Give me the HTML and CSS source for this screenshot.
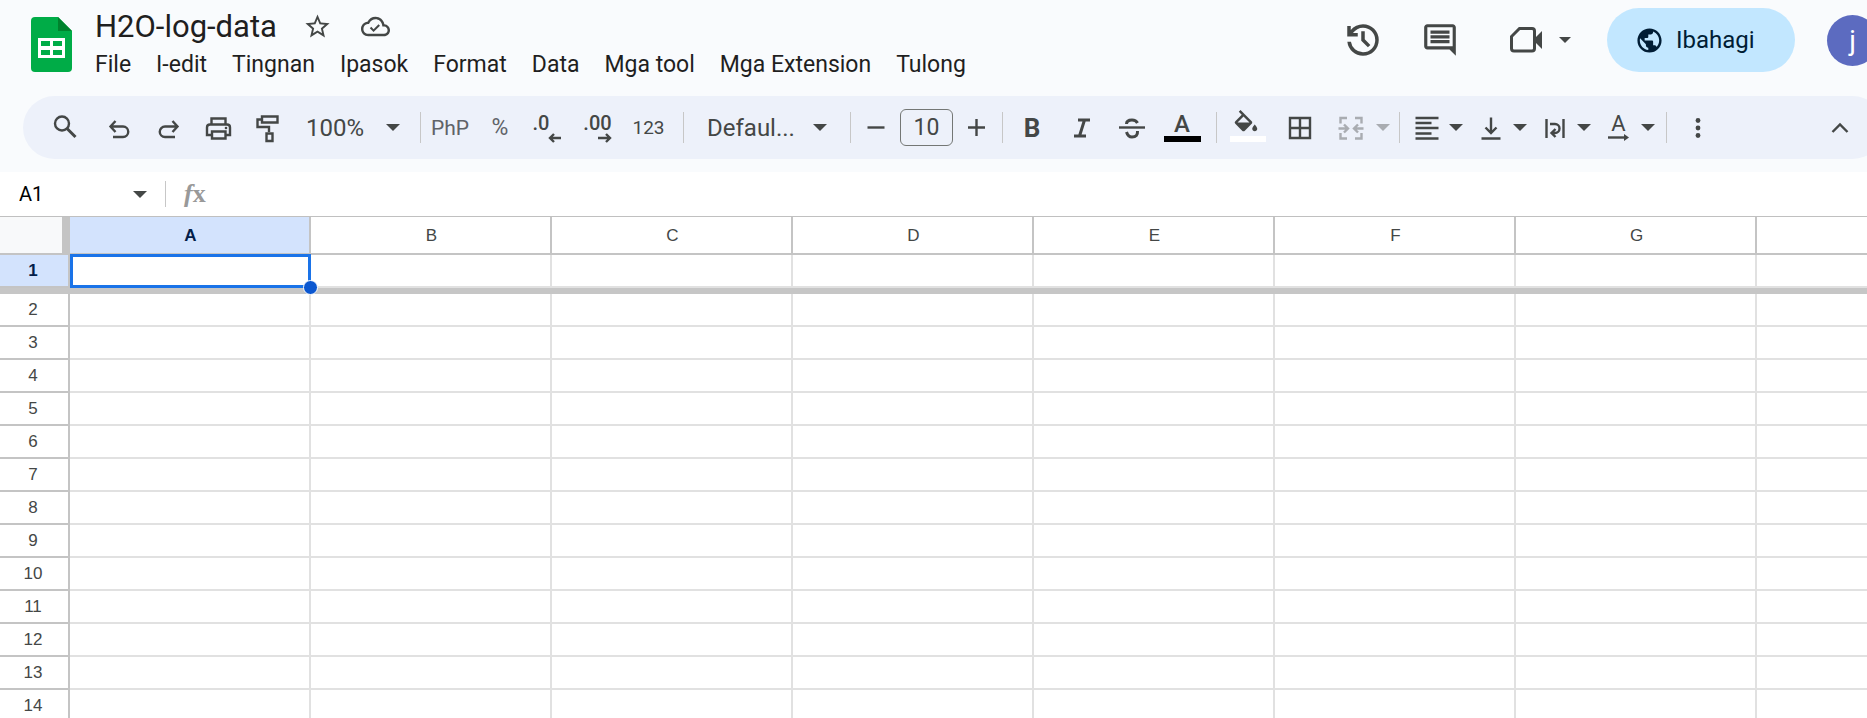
FILE: index.html
```html
<!DOCTYPE html>
<html lang="fil">
<head>
<meta charset="utf-8">
<title>H2O-log-data</title>
<link rel="stylesheet" href="styles.css">
</head>
<body>
<svg class="defs" width="0" height="0" aria-hidden="true">
  <symbol id="caret" viewBox="0 0 14 7"><path d="M0 0h14L7 7z"/></symbol>
</svg>
<header class="top">
  <div class="titlebar">
    <svg class="logo" viewBox="0 0 41 55" aria-label="Sheets">
      <path fill="#00ac47" d="M4 0h23l14 14v37a4 4 0 0 1-4 4H4a4 4 0 0 1-4-4V4a4 4 0 0 1 4-4z"/>
      <path fill="#00832d" d="M27 0l14 14H27z"/>
      <path fill="#fff" fill-rule="evenodd" d="M7 21h27v20H7zM10 24v5h9v-5zM22 24v5h9v-5zM10 33v5h9v-5zM22 33v5h9v-5z"/>
    </svg>
    <div class="doc">
      <div class="name-row">
        <h1 class="name">H2O-log-data</h1>
        <button class="plain" aria-label="Star"><svg class="i29" viewBox="0 0 24 24"><path d="M22 9.24l-7.19-.62L12 2 9.19 8.63 2 9.24l5.46 4.73L5.82 21 12 17.27 18.18 21l-1.63-7.03L22 9.24zM12 15.4l-3.76 2.27 1-4.28-3.32-2.88 4.38-.38L12 6.1l1.71 4.04 4.38.38-3.32 2.88 1 4.28L12 15.4z"/></svg></button>
        <button class="plain" aria-label="Saved"><svg class="i29" viewBox="0 0 24 24"><path d="M19.35 10.04C18.67 6.59 15.64 4 12 4 9.11 4 6.6 5.64 5.35 8.04 2.34 8.36 0 10.91 0 14c0 3.31 2.69 6 6 6h13c2.76 0 5-2.24 5-5 0-2.64-2.05-4.78-4.65-4.96zM19 18H6c-2.21 0-4-1.79-4-4 0-2.05 1.53-3.76 3.56-3.97l1.07-.11.5-.95C8.08 7.14 9.94 6 12 6c2.62 0 4.88 1.86 5.39 4.43l.3 1.5 1.53.11c1.56.1 2.78 1.41 2.78 2.96 0 1.65-1.35 3-3 3z"/><path d="M10.4 14.200l-1.900-1.900L7.300 13.500l3.100 3.100 5.300-5.300-1.200-1.200z"/></svg></button>
      </div>
      <nav class="menu">
        <button>File</button><button>I-edit</button><button>Tingnan</button><button>Ipasok</button><button>Format</button><button>Data</button><button>Mga tool</button><button>Mga Extension</button><button>Tulong</button>
      </nav>
    </div>
    <div class="actions">
      <button class="plain" aria-label="History"><svg class="i42" viewBox="0 0 24 24"><path d="M12 21q-3.45 0-6.012-2.287T3.05 13H5.1q.35 2.6 2.313 4.3T12 19q2.925 0 4.963-2.037T19 12t-2.037-4.963T12 5q-1.725 0-3.225.8T6.25 8H9v2H3V4h2v2.35q1.275-1.6 3.113-2.475T12 3q1.875 0 3.513.713t2.85 1.924 1.925 2.85T21 12t-.712 3.513-1.925 2.85-2.85 1.925T12 21m2.8-4.8L11 12.4V7h2v4.6l3.2 3.2z"/></svg></button>
      <button class="plain" aria-label="Comments"><svg class="i38" viewBox="0 0 24 24"><path d="M21.99 4c0-1.1-.89-2-1.99-2H4c-1.1 0-2 .9-2 2v12c0 1.1.9 2 2 2h14l4 4-.01-18zM20 4v12H4V4zM6 12h12v2H6zm0-3h12v2H6zm0-3h12v2H6z"/></svg></button>
      <button class="plain meet" aria-label="Meet"><svg class="i32" viewBox="0 0 32 32"><path class="s3" d="M9.500 4.500H22a2.500 2.500 0 0 1 2.500 2.500V24.500a2.500 2.500 0 0 1-2.500 2.500H4a2.500 2.500 0 0 1-2.500-2.500V12.500z"/><path d="M25 14l7-7v18l-7-7z"/></svg><svg class="caret small"><use href="#caret"/></svg></button>
      <button class="share"><svg class="i29" viewBox="0 0 24 24"><path d="M12 2C6.48 2 2 6.48 2 12s4.480 10 10 10 10-4.480 10-10S17.520 2 12 2zm-1 17.930c-3.950-.49-7-3.850-7-7.930 0-.62.08-1.210.21-1.790L9 15v1c0 1.100.9 2 2 2v1.930zm6.900-2.540c-.26-.81-1-1.390-1.900-1.390h-1v-3c0-.55-.45-1-1-1H8v-2h2c.55 0 1-.45 1-1V7h2c1.100 0 2-.9 2-2v-.41c2.930 1.190 5 4.060 5 7.410 0 2.080-.8 3.970-2.100 5.390z"/></svg>Ibahagi</button>
      <button class="avatar">j</button>
    </div>
  </div>

  <div class="toolbar" role="toolbar">
    <button class="tb w60" aria-label="Search"><svg class="i32" viewBox="0 0 32 32"><circle class="s" cx="13" cy="11.500" r="7"/><path class="s3" d="M18 16.500l8.500 8.500"/></svg></button>
    <button class="tb" aria-label="Undo"><svg class="i32" viewBox="0 0 32 32"><path class="s" d="M11.500 9L6.500 14.500l5 5.500M7 14.500h12a5 5 0 0 1 0 10.500h-10"/></svg></button>
    <button class="tb" aria-label="Redo"><svg class="i32" viewBox="0 0 32 32"><path class="s" d="M19.500 9l5 5.500-5 5.500M24 14.500H12A5 5 0 0 0 12 25h10"/></svg></button>
    <button class="tb" aria-label="Print"><svg class="i32" viewBox="0 0 32 32"><path class="s" d="M9.500 12V6.500h14V12M9 23H5V15.500q0-3 3-3h17q3 0 3 3V23h-4M10 19.500h13.500v7H10z"/><circle cx="24" cy="16" r="1.300"/></svg></button>
    <button class="tb" aria-label="Paint format"><svg class="i32" viewBox="0 0 32 32"><path class="s" d="M11 4.500h15.500v6H11zM11 7.500H6.500v7.500H18v5M15.500 21.500h6v7.500h-6z"/></svg></button>
    <label class="pick zoom"><select aria-label="Zoom"><option>100%</option></select><svg class="caret"><use href="#caret"/></svg></label>
    <span class="sep"></span>
    <button class="tb w58 fmt">PhP</button>
    <button class="tb w42 fmt pct">%</button>
    <button class="tb w51 dec short" aria-label="Decrease decimal places"><span>.0</span><svg viewBox="0 0 28 12"><path class="s" d="M28 6H17M21 2l-4 4 4 4"/></svg></button>
    <button class="tb w51 dec" aria-label="Increase decimal places"><span>.00</span><svg viewBox="0 0 28 12"><path class="s" d="M14 6h12M22 2l4 4-4 4"/></svg></button>
    <button class="tb w51 fmt n123">123</button>
    <span class="sep sep-a"></span>
    <label class="pick font"><select aria-label="Font"><option>Defaul...</option></select><svg class="caret"><use href="#caret"/></svg></label>
    <span class="sep"></span>
    <button class="tb" aria-label="Decrease font size"><svg class="i32" viewBox="0 0 32 32"><path class="s" d="M7.500 15.500h17"/></svg></button>
    <input class="size" aria-label="Font size" value="10">
    <button class="tb" aria-label="Increase font size"><svg class="i32" viewBox="0 0 32 32"><path class="s" d="M6 15.500h17M14.500 7v17"/></svg></button>
    <span class="sep"></span>
    <button class="tb w58 bold">B</button>
    <button class="tb w42" aria-label="Italic"><svg class="i32" viewBox="0 0 32 32"><path class="s3" d="M12 8h12M8 24h12M18.500 8l-5 16"/></svg></button>
    <button class="tb w58" aria-label="Strikethrough"><svg class="i32" viewBox="0 0 32 32"><path class="s" d="M3 15.500h26"/><path class="s3" d="M10.500 12q0-4 5.500-4 4 0 5.500 3M10.500 20q1.500 5 5.500 5 6 0 5.500-6"/></svg></button>
    <button class="tb w42 color"><span>A</span><i></i></button>
    <span class="sep sep-b"></span>
    <button class="tb w62" aria-label="Fill color"><svg class="fill" viewBox="0 0 38 40"><path transform="translate(2 2) scale(1.250)" d="M16.560 8.940L7.620 0 6.210 1.410l2.380 2.380-5.150 5.150a1.490 1.490 0 0 0 0 2.120l5.500 5.500c.29.29.68.44 1.060.44s.77-.15 1.060-.44l5.500-5.500c.59-.58.59-1.530 0-2.120zM5.210 10L10 5.210 14.790 10H5.210zM19 11.500s-2 2.170-2 3.500c0 1.100.9 2 2 2s2-.9 2-2c0-1.330-2-3.500-2-3.500z"/><path fill="#fff" d="M1 28h36v6H1z"/></svg></button>
    <button class="tb w42" aria-label="Borders"><svg class="i32" viewBox="0 0 32 32"><path class="s" d="M6 6h20v20H6zM16 6v20M6 16h20"/></svg></button>
    <button class="tb merge" disabled aria-label="Merge"><svg class="i32" viewBox="0 0 32 32"><path class="s" d="M12 6H5.500v5.500M20 6h6.500v5.500M12 26.500H5.500V21M20 26.500h6.500V21M3.500 16.500H12M9 12.500l4 4-4 4M28.500 16.500H20M23 12.500l-4 4 4 4"/></svg><svg class="caret"><use href="#caret"/></svg></button>
    <span class="sep"></span>
    <button class="tb drop" aria-label="Horizontal align"><svg class="i32" viewBox="0 0 32 32"><path class="s" d="M4.500 6h23M4.500 11h16M4.500 16h23M4.500 21.500h16M4.500 26.500h23"/></svg><svg class="caret"><use href="#caret"/></svg></button>
    <button class="tb drop" aria-label="Vertical align"><svg class="i32" viewBox="0 0 32 32"><path class="s" d="M6.500 26.500h19M16 5.500v15M10.500 15.500l5.500 5.500 5.500-5.500"/></svg><svg class="caret"><use href="#caret"/></svg></button>
    <button class="tb drop" aria-label="Text wrap"><svg class="i32" viewBox="0 0 32 32"><path class="s" d="M7.500 7v19M24.500 7v19M11 12h5a4.500 4.500 0 0 1 0 9h-3M16.500 17l-4 4 4 4"/></svg><svg class="caret"><use href="#caret"/></svg></button>
    <button class="tb drop rot"><span class="rotate"><span>A</span><svg viewBox="0 0 22 7"><path class="s" d="M0 3.500h18"/><path d="M16 0l5 3.500-5 3.500z"/></svg></span><svg class="caret"><use href="#caret"/></svg></button>
    <span class="sep sep-c"></span>
    <button class="tb w62" aria-label="More"><svg class="i32" viewBox="0 0 32 32"><circle cx="16" cy="8.500" r="2.400"/><circle cx="16" cy="16" r="2.400"/><circle cx="16" cy="23.500" r="2.400"/></svg></button>
    <button class="tb hide" aria-label="Hide menus"><svg class="i32" viewBox="0 0 32 32"><path class="s" d="M8.500 20l7.500-7.500 7.500 7.500"/></svg></button>
  </div>
</header>

<div class="formula">
  <label class="cellname"><input aria-label="Name box" value="A1"><svg class="caret"><use href="#caret"/></svg></label>
  <span class="fx"><i>f</i>x</span>
  <input class="expr" aria-label="Formula">
</div>

<main class="sheet">
  <table class="grid">
    <colgroup><col class="c0"><col class="c"><col class="c"><col class="c"><col class="c"><col class="c"><col class="c"><col class="c"><col class="c"></colgroup>
    <thead><tr><th class="corner"></th><th class="on">A</th><th>B</th><th>C</th><th>D</th><th>E</th><th>F</th><th>G</th><th></th></tr></thead>
    <tbody>
      <tr><th class="on">1</th><td class="active"><span class="ring"></span><span class="handle"></span></td><td></td><td></td><td></td><td></td><td></td><td></td><td></td></tr>
      <tr class="freeze"><td colspan="9"></td></tr>
      <tr><th>2</th><td></td><td></td><td></td><td></td><td></td><td></td><td></td><td></td></tr>
      <tr><th>3</th><td></td><td></td><td></td><td></td><td></td><td></td><td></td><td></td></tr>
      <tr><th>4</th><td></td><td></td><td></td><td></td><td></td><td></td><td></td><td></td></tr>
      <tr><th>5</th><td></td><td></td><td></td><td></td><td></td><td></td><td></td><td></td></tr>
      <tr><th>6</th><td></td><td></td><td></td><td></td><td></td><td></td><td></td><td></td></tr>
      <tr><th>7</th><td></td><td></td><td></td><td></td><td></td><td></td><td></td><td></td></tr>
      <tr><th>8</th><td></td><td></td><td></td><td></td><td></td><td></td><td></td><td></td></tr>
      <tr><th>9</th><td></td><td></td><td></td><td></td><td></td><td></td><td></td><td></td></tr>
      <tr><th>10</th><td></td><td></td><td></td><td></td><td></td><td></td><td></td><td></td></tr>
      <tr><th>11</th><td></td><td></td><td></td><td></td><td></td><td></td><td></td><td></td></tr>
      <tr><th>12</th><td></td><td></td><td></td><td></td><td></td><td></td><td></td><td></td></tr>
      <tr><th>13</th><td></td><td></td><td></td><td></td><td></td><td></td><td></td><td></td></tr>
      <tr><th>14</th><td></td><td></td><td></td><td></td><td></td><td></td><td></td><td></td></tr>
    </tbody>
  </table>
</main>
</body>
</html>
```
FILE: styles.css
```css
* { box-sizing: border-box; }
html, body { height: 100%; }
body {
  margin: 0;
  display: flex;
  flex-direction: column;
  overflow: hidden;
  background: #fff;
  color: #1f1f1f;
  font-family: Roboto, "Liberation Sans", sans-serif;
}
button, input, select {
  font: inherit;
  color: inherit;
  background: none;
  border: 0;
  margin: 0;
  padding: 0;
  outline: 0;
  appearance: none;
}
button { white-space: nowrap; }
svg { display: block; flex: none; fill: currentColor; }
.defs { position: absolute; }
.s, .s3 { fill: none; stroke: currentColor; stroke-width: 2.4; }
.s3 { stroke-width: 3; }
.i29 { width: 29px; height: 29px; }
.i32 { width: 32px; height: 32px; }
.i38 { width: 38px; height: 38px; }
.i42 { width: 42px; height: 42px; }
.caret { width: 14px; height: 7px; }
.caret.small { width: 12px; height: 6px; }

.top { flex: none; background: #f9fbfd; padding-bottom: 13px; }
.titlebar { display: flex; height: 96px; padding: 8px 0 0 31px; }
.logo { width: 41px; height: 55px; margin-top: 9px; }
.doc { margin-left: 23px; }
.name-row { display: flex; align-items: center; height: 37px; color: #444746; }
.name { margin: 0 26px 0 0; font-size: 31px; line-height: 34px; font-weight: 400; color: #1f1f1f; white-space: nowrap; }
.plain { display: flex; align-items: center; color: #444746; }
.name-row .plain { margin-right: 29px; }
.menu { display: flex; gap: 25px; font-size: 23px; line-height: 39px; }
.actions { display: flex; align-items: center; height: 64px; margin: 0 -11px 0 auto; flex: none; }
.actions .i42 { margin-right: 37px; }
.actions .i38 { margin-right: 51px; }
.meet { gap: 17px; margin-right: 36px; }
.share {
  display: flex;
  align-items: center;
  gap: 12px;
  height: 64px;
  width: 188px;
  padding-left: 28px;
  border-radius: 32px;
  background: #c2e7ff;
  color: #001d35;
  font-size: 24px;
}
.avatar { width: 51px; height: 51px; margin-left: 32px; border-radius: 50%; background: #5c6bc0; color: #fff; font-size: 28px; }

.toolbar {
  display: flex;
  align-items: center;
  height: 63px;
  margin: 0 -17px 0 23px;
  padding: 0 20px 0 12px;
  border-radius: 32px;
  background: #edf1fa;
  color: #444746;
}
.tb { display: flex; align-items: center; justify-content: center; flex: none; width: 49px; height: 48px; }
.w42 { width: 42px; }
.w51 { width: 51px; }
.w58 { width: 58px; }
.w60 { width: 60px; }
.w62 { width: 62px; }
.sep { flex: none; width: 1px; height: 31px; background: #c7c7c7; }
.sep-a { margin-left: 9px; }
.sep-b { margin-left: 13px; }
.sep-c { margin-left: 10px; }
.pick { display: grid; align-items: center; flex: none; font-size: 24px; }
.pick > * { grid-area: 1 / 1; }
.pick .caret { justify-self: end; margin-right: 20px; pointer-events: none; }
.pick select { width: 100%; height: 48px; }
.zoom { width: 129px; }
.zoom select { padding-left: 15px; }
.font { width: 166px; }
.font select { padding-left: 23px; }
.font .caret { margin-right: 23px; }
.fmt { font-size: 21px; color: #5f6368; }
.pct { font-size: 23px; }
.n123 { font-size: 19px; color: #444746; }
.dec { flex-direction: column; font-size: 20px; font-weight: 500; line-height: 18px; padding-top: 2px; }
.dec svg { width: 28px; height: 12px; }
.short span { width: 28px; text-align: left; }
.size { flex: none; width: 53px; height: 37px; border: 1px solid #747775; border-radius: 6px; text-align: center; font-size: 23px; }
.bold { font-size: 26px; font-weight: 700; }
.color { flex-direction: column; font-size: 24px; font-weight: 500; line-height: 23px; }
.color i { width: 37px; height: 6px; background: #000; }
.fill { width: 38px; height: 40px; }
.merge { width: 78px; gap: 9px; padding-left: 5px; opacity: .4; }
.drop { width: 64px; gap: 6px; padding-left: 9px; }
.rotate { display: flex; flex-direction: column; align-items: center; width: 32px; font-size: 22px; line-height: 20px; }
.rotate svg { width: 22px; height: 7px; }
.hide { margin-left: auto; }

.formula { flex: none; display: flex; align-items: center; height: 45px; border-bottom: 1px solid #c0c0c0; font-size: 20px; }
.cellname { display: flex; align-items: center; width: 166px; height: 26px; padding: 0 18px 0 19px; border-right: 1px solid #c7c7c7; }
.cellname input { width: 100%; min-width: 0; color: #000; }
.cellname .caret { color: #444746; }
.fx { margin-left: 18px; font: 700 26px "Liberation Serif", serif; color: #999; }
.expr { flex: 1; }

.sheet { flex: 1; min-height: 0; overflow: hidden; }
.grid { table-layout: fixed; width: 1998px; border-spacing: 0; font-family: "Liberation Sans", Arial, sans-serif; font-size: 17px; }
.c0 { width: 70px; }
.c { width: 241px; }
.grid th, .grid td { height: 33px; padding: 0; border: 0 solid #e1e1e1; border-width: 0 2px 2px 0; }
.grid th { border-color: #c4c4c4; font-weight: 400; color: #444746; text-align: center; }
.grid tbody th { padding-right: 2px; }
.grid thead th { height: 38px; padding: 2px 0 0 2px; }
.grid th.on { background: #d3e3fd; color: #041e49; font-weight: 700; }
.grid .corner { background: #f8f9fa; box-shadow: inset -6px 0 #c4c4c4; }
.grid .freeze td { height: 6px; border: 0; background: #c6c6c6; }
.active { position: relative; }
.ring { position: absolute; inset: -1px -2px -2px 0; border: 3px solid #1a73e8; }
.handle { position: absolute; z-index: 1; right: -9px; bottom: -9px; width: 15px; height: 15px; border: 1px solid #fff; border-radius: 50%; background: #0b57d0; }
```
